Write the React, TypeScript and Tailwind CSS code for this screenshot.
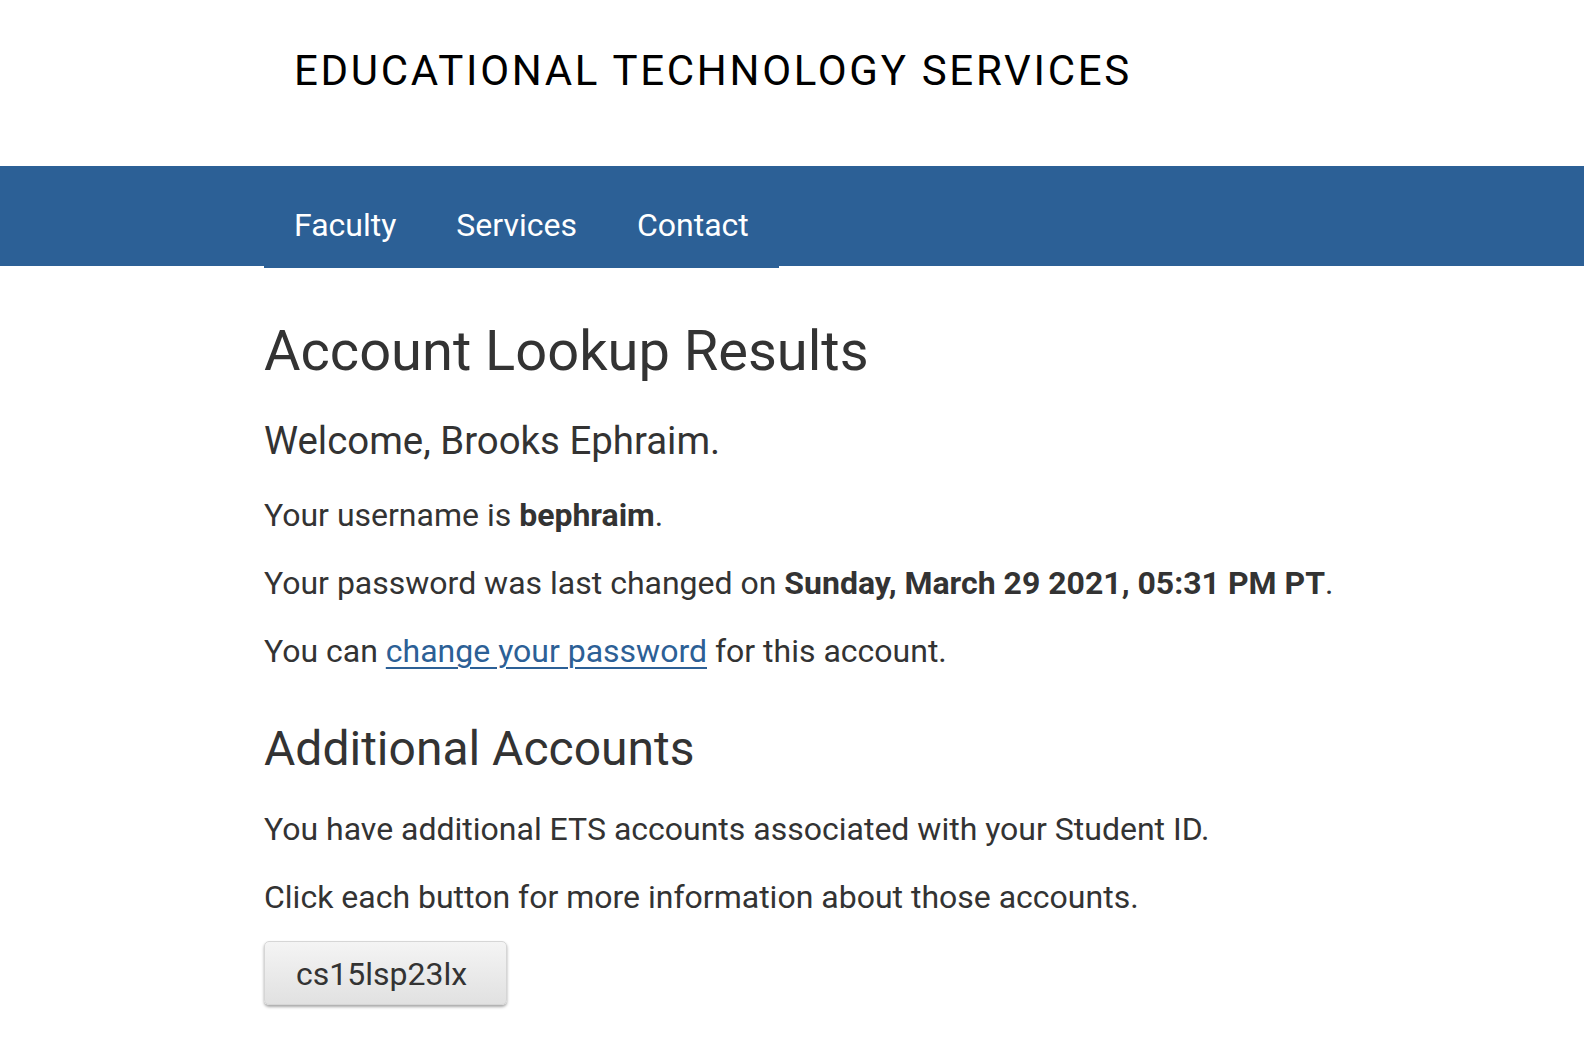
const navLinks = ["Faculty", "Services", "Contact"];

export default function App() {
  return (
    <div className="min-h-screen bg-white font-['Roboto','Liberation_Sans',sans-serif] text-[#333]">
      {/* Site title */}
      <header className="h-[166px]">
        <div className="mx-auto w-[1056px] pl-[30px] pt-[46px]">
          <div className="text-[42px] leading-[50px] tracking-[2.7px] text-black">
            EDUCATIONAL TECHNOLOGY SERVICES
          </div>
        </div>
      </header>

      {/* Main nav */}
      <nav className="h-[100px] bg-[#2c6096]">
        <div className="mx-auto w-[1056px]">
          <ul className="inline-flex h-[102px] bg-[#2c6096]">
            {navLinks.map((label) => (
              <li key={label}>
                <a
                  href="#"
                  className="block px-[30px] pt-[43px] text-[32px] leading-[32px] text-white"
                >
                  {label}
                </a>
              </li>
            ))}
          </ul>
        </div>
      </nav>

      {/* Page content */}
      <main className="mx-auto w-[1056px] pt-[51px] pb-10">
        <h1 className="text-[56px] leading-[68px]">Account Lookup Results</h1>
        <h3 className="mt-[34px] text-[38.4px] leading-[44px]">Welcome, Brooks Ephraim.</h3>

        <p className="mt-[34px] text-[32px] leading-[36px]">
          Your username is <strong className="font-bold">bephraim</strong>.
        </p>
        <p className="mt-[32px] whitespace-nowrap text-[32px] leading-[36px]">
          Your password was last changed on{" "}
          <strong className="font-bold">Sunday, March 29 2021, 05:31 PM PT</strong>.
        </p>
        <p className="mt-[32px] text-[32px] leading-[36px]">
          You can{" "}
          <a href="#" className="text-[#2c6096] underline decoration-2 underline-offset-[5px]">
            change your password
          </a>{" "}
          for this account.
        </p>

        <h2 className="mt-[50px] text-[48px] leading-[60px]">Additional Accounts</h2>
        <p className="mt-[32px] text-[32px] leading-[36px]">
          You have additional ETS accounts associated with your Student ID.
        </p>
        <p className="mt-[32px] text-[32px] leading-[36px]">
          Click each button for more information about those accounts.
        </p>

        <button
          type="button"
          className="mt-[26px] h-[64px] w-[243px] rounded-[5px] border border-[#d6d6d6] bg-gradient-to-b from-[#f4f4f4] to-[#e1e1e1] pl-[31px] pt-[2px] text-left text-[32px] text-[#333] shadow-[0_2px_3px_rgba(0,0,0,0.35)]"
        >
          cs15lsp23lx
        </button>
      </main>
    </div>
  );
}
